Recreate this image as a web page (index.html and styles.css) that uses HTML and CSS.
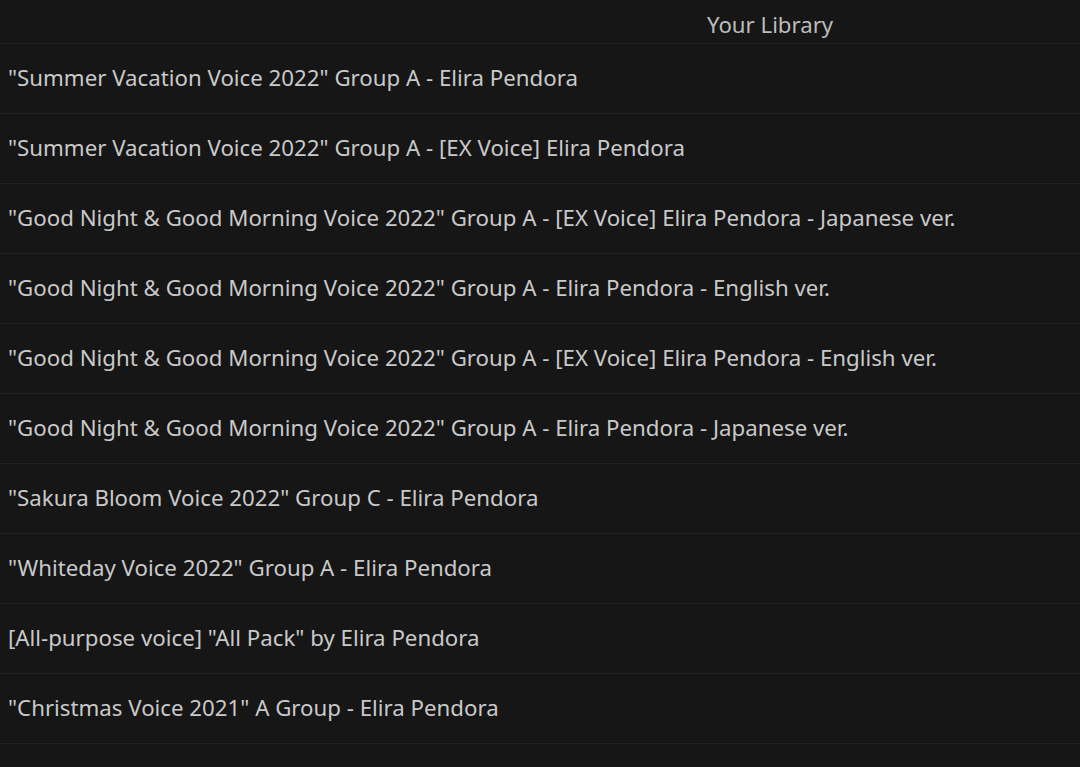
FILE: index.html
```html
<!DOCTYPE html>
<html>
<head>
<meta charset="utf-8">
<link rel="stylesheet" href="styles.css">
</head>
<body>
<div class="library">
  <div class="header"><span class="title">Your Library</span></div>
  <ul class="list">
    <li class="item">"Summer Vacation Voice 2022" Group A - Elira Pendora</li>
    <li class="item">"Summer Vacation Voice 2022" Group A - [EX Voice] Elira Pendora</li>
    <li class="item">"Good Night &amp; Good Morning Voice 2022" Group A - [EX Voice] Elira Pendora - Japanese ver.</li>
    <li class="item">"Good Night &amp; Good Morning Voice 2022" Group A - Elira Pendora - English ver.</li>
    <li class="item">"Good Night &amp; Good Morning Voice 2022" Group A - [EX Voice] Elira Pendora - English ver.</li>
    <li class="item">"Good Night &amp; Good Morning Voice 2022" Group A - Elira Pendora - Japanese ver.</li>
    <li class="item">"Sakura Bloom Voice 2022" Group C - Elira Pendora</li>
    <li class="item">"Whiteday Voice 2022" Group A - Elira Pendora</li>
    <li class="item">[All-purpose voice] "All Pack" by Elira Pendora</li>
    <li class="item">"Christmas Voice 2021" A Group - Elira Pendora</li>
  </ul>
</div>
</body>
</html>
```

FILE: styles.css
```css
html, body {
  margin: 0;
  padding: 0;
  background: #161616;
  overflow: hidden;
}
body {
  font-family: "Noto Sans", "Open Sans", sans-serif;
  color: #c9c9c9;
}
.library {
  display: flex;
  flex-direction: column;
}
.header {
  height: 44px;
  display: flex;
  align-items: center;
  padding-left: 707px;
  padding-top: 6px;
  box-sizing: border-box;
  border-bottom: 1px solid #222222;
}
.title {
  font-size: 22.2px;
  color: #bdbdbd;
}
.list {
  list-style: none;
  margin: 0;
  padding: 0;
}
.item {
  height: 70px;
  box-sizing: border-box;
  display: flex;
  align-items: center;
  padding-left: 8px;
  padding-bottom: 2px;
  font-size: 22.25px;
  border-bottom: 1px solid #222222;
  white-space: nowrap;
}
```
